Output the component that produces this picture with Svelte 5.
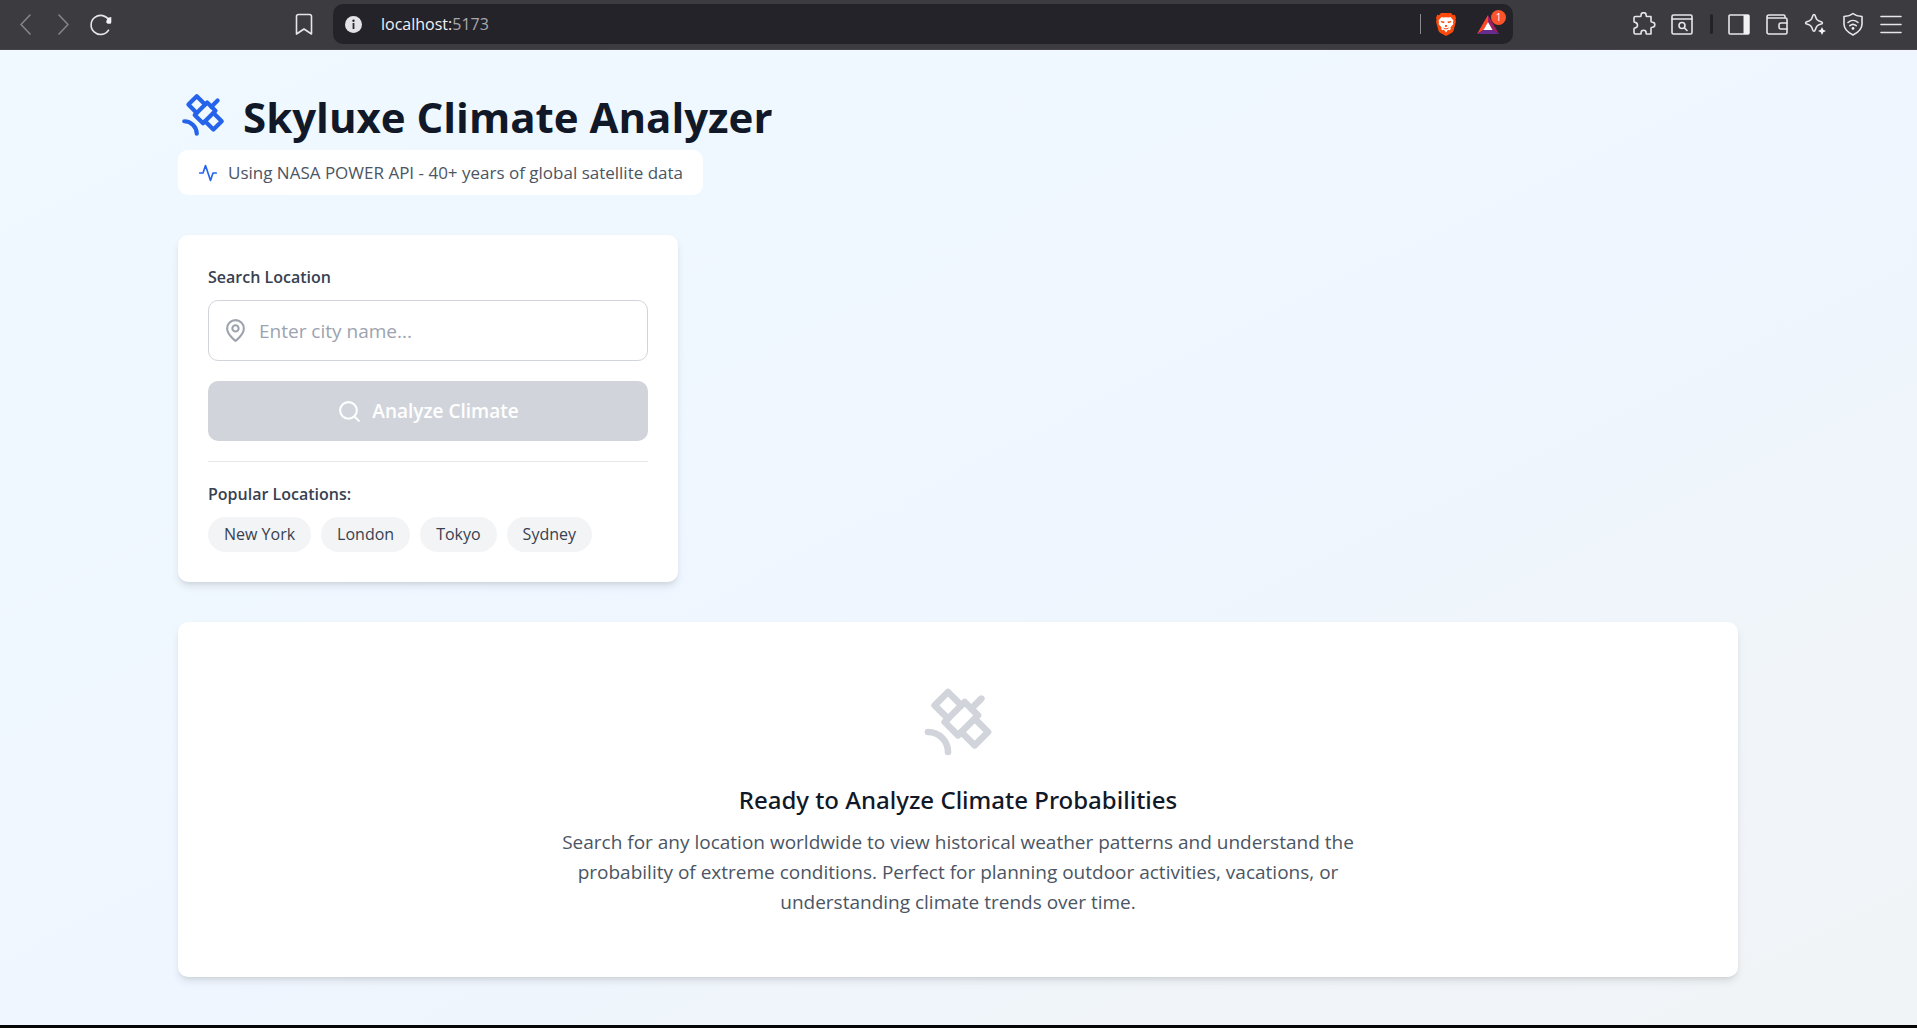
<script>
  const cities = ['New York', 'London', 'Tokyo', 'Sydney'];
  let city = $state('');
</script>

{#snippet satellite()}
  <svg class="line-icon" viewBox="0 0 24 24" aria-hidden="true">
    <path d="M13 7 9 3 5 7l4 4" />
    <path d="m17 11 4 4-4 4-4-4" />
    <path d="m8 12 4 4 6-6-4-4Z" />
    <path d="m16 8 3-3" />
    <path d="M9 21a6 6 0 0 0-6-6" />
  </svg>
{/snippet}

<div class="window">
  <nav class="toolbar" aria-label="Browser">
    <div class="tools-left">
      <button class="tool dim" aria-label="Back">
        <svg viewBox="0 0 24 24"><path d="M17 3 8 12.500 17 22" /></svg>
      </button>
      <button class="tool dim" aria-label="Forward">
        <svg viewBox="0 0 24 24"><path d="M8 3 17 12.500 8 22" /></svg>
      </button>
      <button class="tool" aria-label="Reload">
        <svg viewBox="0 0 24 24">
          <path d="M19.500 18.200A9.500 9.500 0 1 1 20 8.500" />
          <path class="solid" d="M22.300 5v5.200a1.500 1.500 0 0 1-1.500 1.500h-1.600a2 2 0 0 1-1.700-3l1.500-3Z" />
        </svg>
      </button>
      <button class="tool bookmark" aria-label="Bookmark">
        <svg viewBox="0 0 24 24"><path d="M6.500 2.500h11a2 2 0 0 1 2 2v17.500l-7.500-5-7.500 5V4.500a2 2 0 0 1 2-2Z" /></svg>
      </button>
    </div>

    <div class="address">
      <svg class="info" viewBox="0 0 17 17" aria-hidden="true">
        <circle cx="8.500" cy="8.500" r="8.500" fill="#e4e4e8" />
        <circle cx="8.500" cy="4.800" r="1.200" fill="#29282d" />
        <rect x="7.600" y="7" width="1.800" height="6" fill="#29282d" />
      </svg>
      <span class="url">localhost:<span class="port">5173</span></span>
      <span class="bar"></span>
      <button class="badge-btn" aria-label="Shields">
        <svg class="lion" viewBox="0 0 20 23">
          <path fill="#fb4a0c" d="M5 0h10l2 2.200 1.800-.4L20 5l-.6 2 .6 1.500-2.400 9Q17 19 15.500 20L10 23l-5.500-3Q3 19 2.400 17.500L0 8.500.6 7 0 5l1.200-3.200 1.800.4Z" />
          <path fill="#fff" d="m5.500 4 2.200.6L10 4.200l2.300.4 2.200-.6 3 3.600-.6 2 .5 1.400-3 3.400.4 1.600-1.200 1.200-1.600-.4-2 2.800-2-2.800-1.600.4-1.200-1.200.4-1.600-3-3.400.5-1.400-.6-2Z" />
          <path fill="#fb4a0c" d="m4.500 8 4 .6-.5 1.600-2.500-.7Zm11 0-4 .6.500 1.600 2.500-.7ZM9.200 12h1.600l.5 1.300-1.300.9-1.300-.9ZM7 14.600l3 1 3-1-.9 1.200-2.100.8-2.100-.8Z" />
        </svg>
      </button>
      <button class="badge-btn rewards" aria-label="Rewards, 1 new">
        <svg viewBox="0 0 22 19">
          <path fill="#ff4724" d="M11 0 0 19l6.500-4L11 7Z" />
          <path fill="#9e1f63" d="m11 0 11 19-6.500-4L11 7Z" />
          <path fill="#662d91" d="M0 19h22l-6.500-4h-9Z" />
          <path fill="#fff" d="m11 7 4.600 8H6.400Z" />
        </svg>
        <span class="count">1</span>
      </button>
    </div>

    <div class="tools-right">
      <button class="tool" aria-label="Extensions">
        <svg viewBox="0 0 24 24"><path d="M3.500 4.500h4.800c.9 0 .7-.7.700-1.300a2.600 2.600 0 0 1 5.200 0c0 .6-.2 1.300.7 1.300h4.100v4.800c0 .9.6.9 1.300.9a2.500 2.500 0 0 1 0 5c-.7 0-1.300 0-1.300.9V22h-4.200c-.8 0-.7-.7-.7-1.300a2.500 2.500 0 0 0-5 0c0 .6.100 1.300-.7 1.300H3.500a1.500 1.500 0 0 1-1.500-1.500v-3.700c0-.8.500-.9 1.200-.9a2.800 2.800 0 0 0 0-5.500C2.500 10.400 2 10.300 2 9.500V6a1.500 1.500 0 0 1 1.500-1.500Z" /></svg>
      </button>
      <button class="tool" aria-label="Search tabs">
        <svg viewBox="0 0 24 24">
          <rect x="2" y="3" width="20" height="19" rx="1.500" />
          <path d="M2 7h20M14.500 16l2.500 2.500" />
          <circle cx="12" cy="13.500" r="3" />
        </svg>
      </button>
      <span class="split"></span>
      <button class="tool" aria-label="Sidebar">
        <svg viewBox="0 0 24 24">
          <rect x="2" y="3" width="20" height="19" rx="1" />
          <path class="solid" d="M16.500 3H22v19h-5.500Z" />
        </svg>
      </button>
      <button class="tool" aria-label="Wallet">
        <svg viewBox="0 0 24 24">
          <path d="M20 6V4.500A1.500 1.500 0 0 0 18.500 3H4a2 2 0 0 0-2 2v15a2 2 0 0 0 2 2h16.500a1.500 1.500 0 0 0 1.500-1.500v-13A1.500 1.500 0 0 0 20.500 6H3" />
          <path d="M22 11h-6a2 2 0 0 0-2 2v2a2 2 0 0 0 2 2h6" />
        </svg>
      </button>
      <button class="tool" aria-label="Assistant">
        <svg viewBox="0 0 24 24">
          <path d="M11 2.500c.8 0 1 .5 1.200 1.200 1.200 4 2 4.800 6 6 .7.200 1.200.500 1.200 1.200s-.5 1-1.200 1.200c-4 1.200-4.800 2-6 6-.2.700-.4 1.200-1.200 1.200s-1-.5-1.200-1.200c-1.200-4-2-4.800-6-6-.7-.2-1.200-.5-1.200-1.200s.5-1 1.200-1.200c4-1.200 4.800-2 6-6C10 3 10.200 2.500 11 2.500Z" />
          <path class="solid" d="m19 15 1.300 2.700 2.700 1.300-2.700 1.300L19 23l-1.300-2.700L15 19l2.700-1.300Z" />
        </svg>
      </button>
      <button class="tool" aria-label="VPN">
        <svg viewBox="0 0 24 24">
          <path d="M12 1.500c2 1.600 5 2.700 9 3V12c0 5-4 8.500-9 11-5-2.500-9-6-9-11V4.500c4-.3 7-1.400 9-3Z" />
          <path d="M7 10.500c3-2.700 7-2.700 10 0M8.800 13.700c2-1.700 4.400-1.700 6.400 0" />
          <circle class="solid" cx="12" cy="16.400" r="1.400" />
        </svg>
      </button>
      <button class="tool" aria-label="Menu">
        <svg viewBox="0 0 24 24"><path d="M2 4.500h20M2 12.500h20M2 20.500h20" /></svg>
      </button>
    </div>
  </nav>

  <main class="page">
    <div class="container">
      <header>
        <div class="brand">
          {@render satellite()}
          <h1>Skyluxe Climate Analyzer</h1>
        </div>
        <p class="source">
          <svg class="line-icon" viewBox="0 0 24 24" aria-hidden="true"><path d="M22 12h-4l-3 9L9 3l-3 9H2" /></svg>
          Using NASA POWER API - 40+ years of global satellite data
        </p>
      </header>

      <form class="card search" onsubmit={(e) => e.preventDefault()}>
        <label class="label" for="city">Search Location</label>
        <div class="field">
          <svg class="line-icon" viewBox="0 0 24 24" aria-hidden="true">
            <path d="M20 10c0 6-8 12-8 12s-8-6-8-12a8 8 0 0 1 16 0Z" />
            <circle cx="12" cy="10" r="3" />
          </svg>
          <input id="city" type="text" placeholder="Enter city name..." bind:value={city} />
        </div>
        <button class="analyze" type="submit" disabled={!city.trim()}>
          <svg class="line-icon" viewBox="0 0 24 24" aria-hidden="true">
            <circle cx="11" cy="11" r="8" />
            <path d="m21 21-4.300-4.300" />
          </svg>
          Analyze Climate
        </button>
        <div class="popular">
          <p class="label">Popular Locations:</p>
          <div class="pills">
            {#each cities as name}
              <button class="pill" type="button" onclick={() => (city = name)}>{name}</button>
            {/each}
          </div>
        </div>
      </form>

      <section class="card empty">
        {@render satellite()}
        <h2>Ready to Analyze Climate Probabilities</h2>
        <p>
          Search for any location worldwide to view historical weather patterns and understand the
          probability of extreme conditions. Perfect for planning outdoor activities, vacations, or
          understanding climate trends over time.
        </p>
      </section>
    </div>
  </main>
</div>

<style>
  :global(body) {
    margin: 0;
  }
  .window {
    display: flex;
    flex-direction: column;
    min-height: 100vh;
    box-sizing: border-box;
    border-bottom: 3px solid #060606;
    font-family: 'Open Sans', 'Noto Sans', sans-serif;
    font-size: 19px;
    line-height: 30px;
    color: #111827;
  }
  h1,
  h2,
  p {
    margin: 0;
  }
  button,
  input {
    font: inherit;
    color: inherit;
    padding: 0;
    border: 0;
    background: none;
  }
  svg {
    display: block;
    flex: none;
  }
  .line-icon {
    fill: none;
    stroke: currentColor;
    stroke-width: 2;
    stroke-linecap: round;
    stroke-linejoin: round;
  }

  .toolbar {
    display: flex;
    height: 50px;
    box-sizing: border-box;
    padding-top: 4px;
    background: #3c3b3f;
    border-bottom: 1px solid #4a454c;
  }
  .tools-left,
  .tools-right {
    display: flex;
    align-items: center;
    gap: 14px;
    height: 40px;
    box-sizing: border-box;
  }
  .tools-left {
    flex: 0 0 333px;
    padding: 0 17px 0 13px;
  }
  .tools-right {
    flex: 0 0 404px;
    justify-content: flex-end;
    padding-right: 14px;
  }
  .bookmark {
    margin-left: auto;
  }
  .tool svg {
    width: 24px;
    height: 24px;
    fill: none;
    stroke: #e6e6ea;
    stroke-width: 1.6;
    stroke-linejoin: round;
    stroke-linecap: round;
  }
  .tool .solid {
    fill: #f2f2f5;
    stroke: none;
  }
  .dim svg {
    stroke: #85848a;
  }
  .split {
    width: 3px;
    height: 20px;
    margin-left: 2px;
    border-radius: 2px;
    background: #232227;
  }
  .address {
    flex: 1;
    min-width: 0;
    display: flex;
    align-items: center;
    height: 40px;
    box-sizing: border-box;
    padding: 0 14px 0 12px;
    border-radius: 10px;
    background: #242329;
    font-size: 16px;
  }
  .info {
    width: 17px;
    height: 17px;
  }
  .url {
    margin: 0 auto 0 19px;
    color: #f1f1f4;
  }
  .port {
    color: #a9a8ae;
  }
  .bar {
    width: 1px;
    height: 20px;
    background: #8a898f;
  }
  .badge-btn {
    position: relative;
    margin-left: 15px;
  }
  .lion {
    width: 20px;
    height: 23px;
  }
  .rewards {
    margin-left: 21px;
  }
  .rewards svg {
    width: 22px;
    height: 19px;
  }
  .count {
    position: absolute;
    top: -5px;
    right: -7px;
    width: 15px;
    height: 15px;
    border-radius: 50%;
    background: #fb542b;
    color: #fff;
    font-size: 10px;
    line-height: 15px;
    text-align: center;
  }

  .page {
    flex: 1;
    background: linear-gradient(to bottom right, #f0f9ff, #eff6ff 50%, #f1f4f6);
  }
  .container {
    display: flex;
    flex-direction: column;
    gap: 40px;
    max-width: 1601px;
    box-sizing: border-box;
    margin: 0 auto;
    padding: 40px 21px 40px 20px;
  }
  header {
    display: flex;
    flex-direction: column;
    align-items: flex-start;
    gap: 8px;
  }
  .brand {
    display: flex;
    align-items: flex-start;
    gap: 15px;
  }
  .brand svg {
    width: 50px;
    height: 50px;
    color: #2563eb;
  }
  h1 {
    padding-top: 2px;
    font-size: 42px;
    font-weight: 700;
    line-height: 50px;
  }
  .source {
    display: flex;
    align-items: center;
    gap: 10px;
    padding: 10px 20px;
    border-radius: 10px;
    background: #fff;
    color: #4b5563;
    font-size: 17px;
    line-height: 25px;
  }
  .source svg {
    width: 20px;
    height: 20px;
    color: #2563eb;
  }
  .card {
    box-sizing: border-box;
    border-radius: 10px;
    background: #fff;
    box-shadow:
      0 5px 8px -1px rgb(0 0 0 / 0.1),
      0 3px 5px -3px rgb(0 0 0 / 0.1);
  }
  .search {
    display: flex;
    flex-direction: column;
    width: 100%;
    max-width: 500px;
    padding: 30px;
  }
  .label {
    margin-bottom: 10px;
    color: #374151;
    font-size: 16px;
    font-weight: 600;
    line-height: 25px;
  }
  .field {
    display: flex;
    align-items: center;
    gap: 11px;
    height: 61px;
    box-sizing: border-box;
    padding: 0 14px;
    border: 1px solid #d1d5db;
    border-radius: 10px;
    color: #9ca3af;
  }
  .field svg,
  .analyze svg {
    width: 25px;
    height: 25px;
  }
  input {
    flex: 1;
    min-width: 0;
    height: 30px;
    outline: 0;
    color: #111827;
  }
  input::placeholder {
    color: #9ca3af;
    opacity: 1;
  }
  .analyze {
    display: flex;
    align-items: center;
    justify-content: center;
    gap: 10px;
    margin: 20px 0;
    padding: 15px;
    border-radius: 10px;
    background: #2563eb;
    color: #fff;
    font-weight: 600;
  }
  .analyze:disabled {
    background: #d1d5db;
  }
  .popular {
    padding-top: 20px;
    border-top: 1px solid #e5e7eb;
  }
  .pills {
    display: flex;
    flex-wrap: wrap;
    gap: 10px;
  }
  .pill {
    padding: 5px 16px;
    border-radius: 18px;
    background: #f3f4f6;
    color: #374151;
    font-size: 16px;
    line-height: 25px;
  }
  .empty {
    display: flex;
    flex-direction: column;
    align-items: center;
    padding: 60px;
    text-align: center;
  }
  .empty svg {
    width: 80px;
    height: 80px;
    margin-bottom: 20px;
    color: #d1d5db;
  }
  h2 {
    margin-bottom: 10px;
    font-family: 'Noto Sans', sans-serif;
    font-size: 24px;
    font-weight: 500;
    line-height: 35px;
  }
  .empty p {
    max-width: 840px;
    color: #4b5563;
  }
</style>
